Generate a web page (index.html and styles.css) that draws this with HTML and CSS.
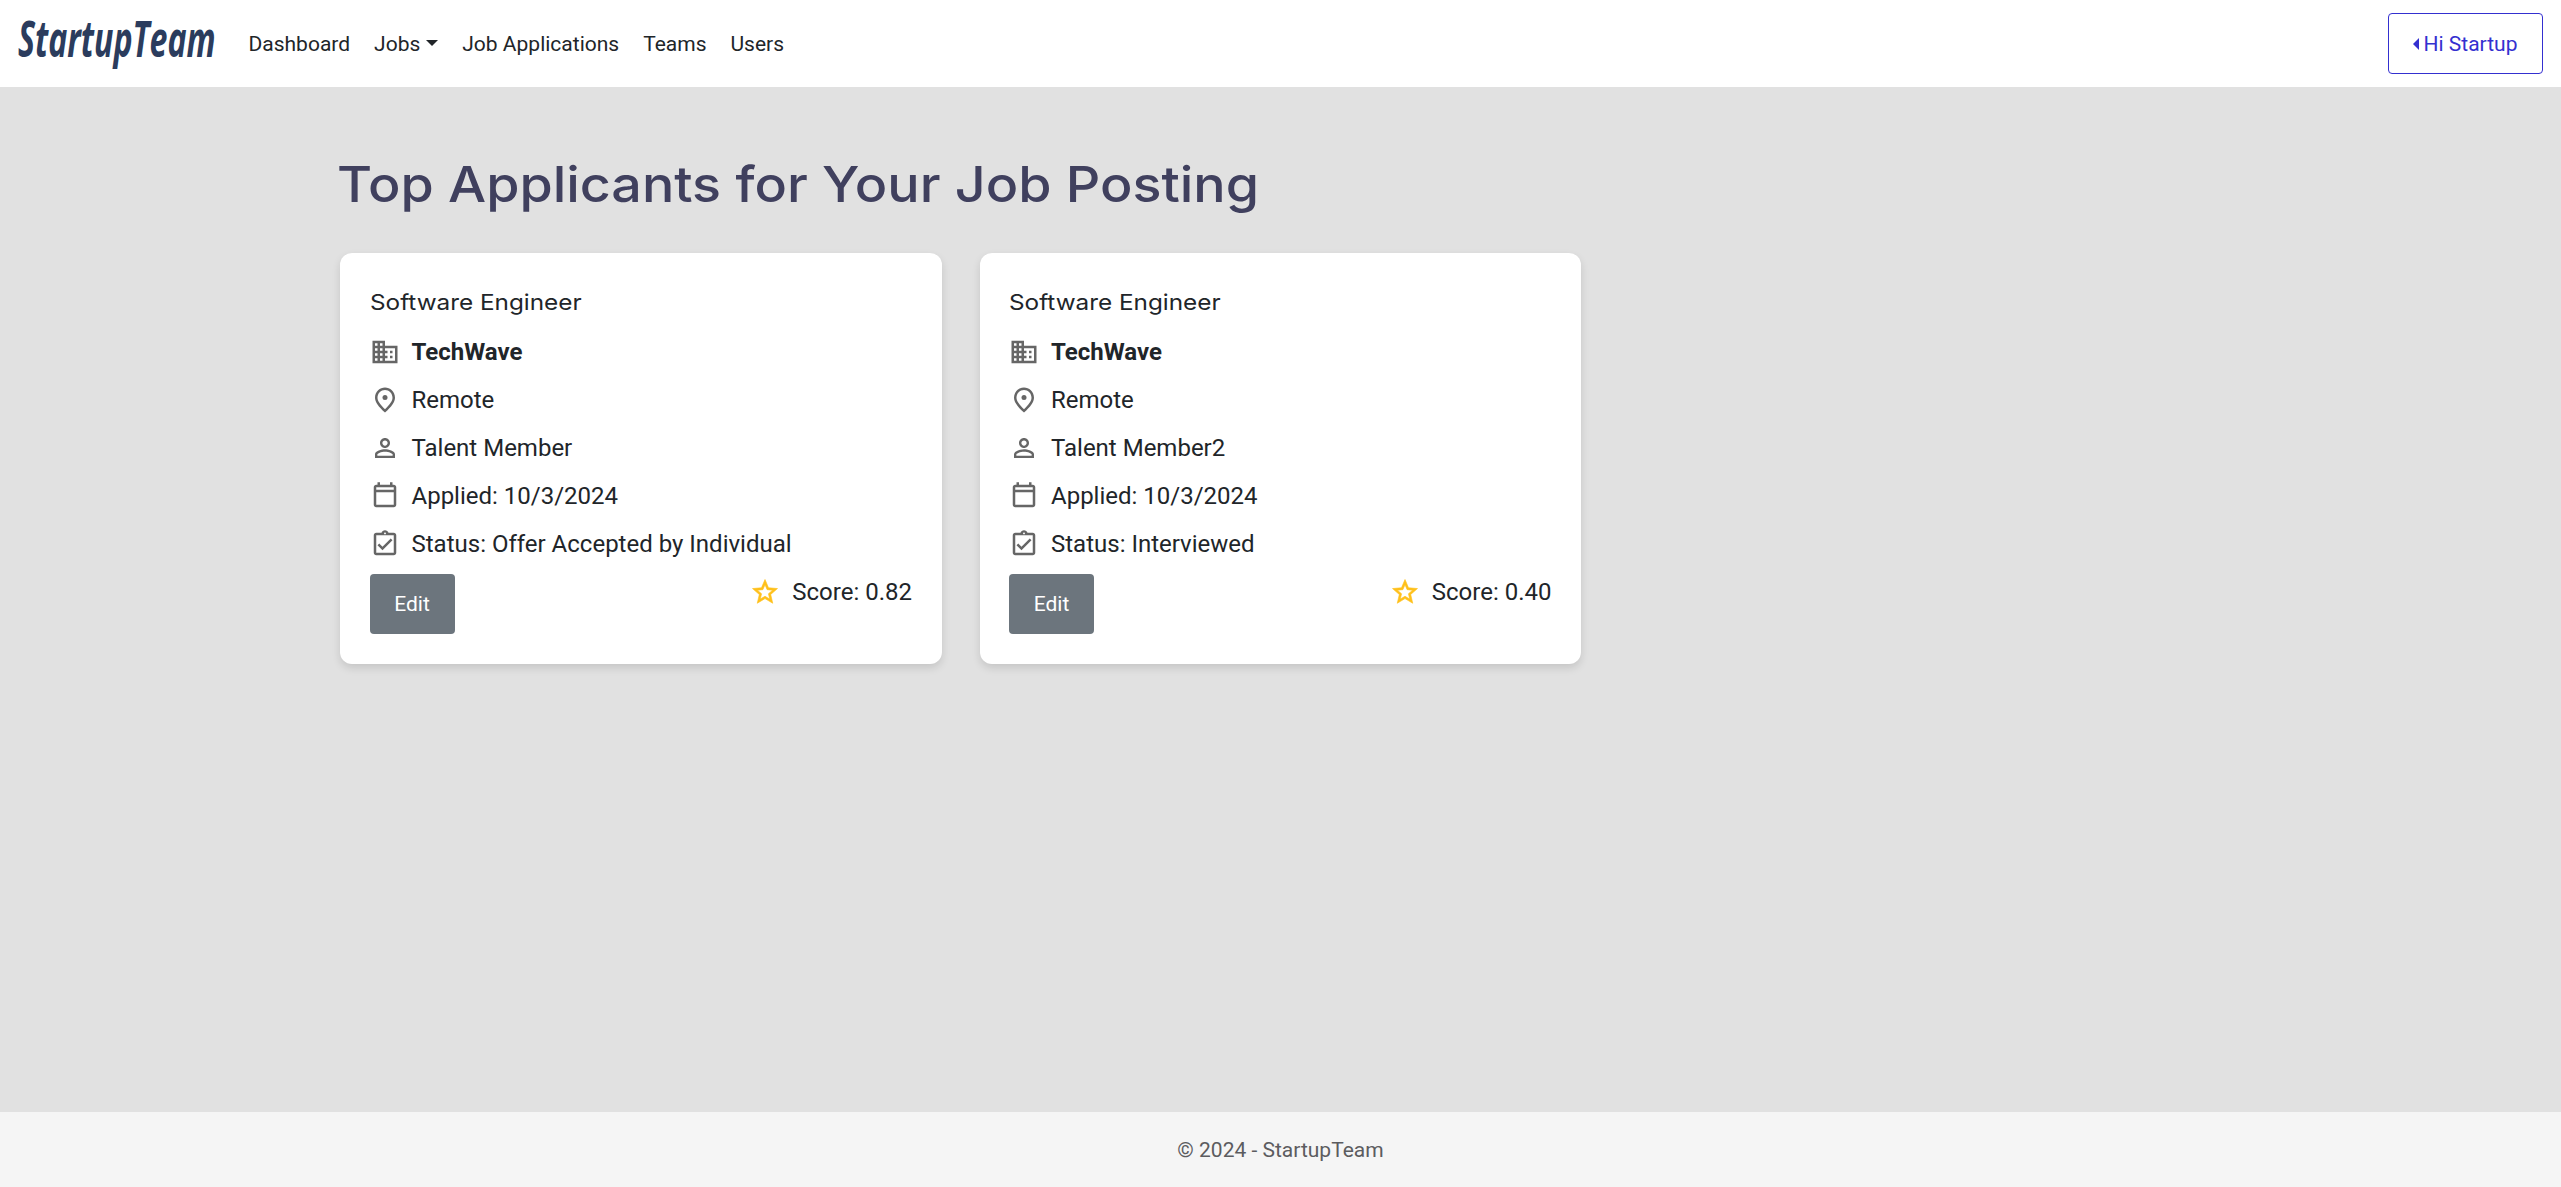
FILE: index.html
```html
<!DOCTYPE html>
<html lang="en">
<head>
<meta charset="utf-8">
<title>Top Applicants - StartupTeam</title>
<link rel="stylesheet" href="styles.css">
</head>
<body>
<svg class="sprite" aria-hidden="true">
  <symbol id="business" viewBox="0 0 24 24"><path d="M12 7V3H2v18h20V7H12zM6 19H4v-2h2v2zm0-4H4v-2h2v2zm0-4H4V9h2v2zm0-4H4V5h2v2zm4 12H8v-2h2v2zm0-4H8v-2h2v2zm0-4H8V9h2v2zm0-4H8V5h2v2zm10 12h-8v-2h2v-2h-2v-2h2v-2h-2V9h8v10zm-2-8h-2v2h2v-2zm0 4h-2v2h2v-2z"/></symbol>
  <symbol id="place" viewBox="0 0 24 24"><path d="M12 2C8 2 4 5.100 4 10.200c0 3.300 2.700 7.200 8 11.800 5.300-4.600 8-8.500 8-11.800C20 5.100 16 2 12 2zm0 17.300c-4-3.700-6-6.700-6-9.100C6 6.600 8.700 4 12 4s6 2.600 6 6.200c0 2.400-2 5.400-6 9.100z"/><circle cx="12" cy="10" r="2"/></symbol>
  <symbol id="person" viewBox="0 0 24 24"><path d="M12 5.900c1.160 0 2.100.94 2.100 2.100s-.94 2.100-2.100 2.100S9.900 9.160 9.900 8s.94-2.100 2.100-2.100m0 9c2.970 0 6.100 1.460 6.100 2.100v1.100H5.900V17c0-.64 3.130-2.100 6.100-2.100M12 4C9.790 4 8 5.790 8 8s1.790 4 4 4 4-1.790 4-4-1.790-4-4-4zm0 9c-2.670 0-8 1.340-8 4v3h16v-3c0-2.660-5.330-4-8-4z"/></symbol>
  <symbol id="calendar" viewBox="0 0 24 24"><path d="M19 3h-1V1h-2v2H8V1H6v2H5c-1.100 0-2 .9-2 2v14c0 1.100.9 2 2 2h14c1.100 0 2-.9 2-2V5c0-1.100-.9-2-2-2zm0 16H5V9h14v10zM5 7V5h14v2H5z"/></symbol>
  <symbol id="assignment" viewBox="0 0 24 24"><path d="M19 3h-4.180C14.400 1.840 13.300 1 12 1s-2.400.84-2.820 2H5c-1.100 0-2 .9-2 2v14c0 1.100.9 2 2 2h14c1.100 0 2-.9 2-2V5c0-1.100-.9-2-2-2zm-7-.25c.41 0 .75.340.75.75s-.34.750-.75.750-.75-.340-.75-.75.340-.75.750-.75zM19 19H5V5h14v14zM17.990 9l-1.410-1.420-6.590 6.590-2.580-2.570-1.420 1.410 4 3.990z"/></symbol>
  <symbol id="star" viewBox="0 0 24 24"><path d="M22 9.240l-7.190-.62L12 2 9.190 8.630 2 9.240l5.460 4.730L5.820 21 12 17.270 18.180 21l-1.630-7.030L22 9.240zM12 15.400l-3.760 2.270 1-4.280-3.320-2.880 4.380-.38L12 6.100l1.710 4.040 4.380.38-3.320 2.880 1 4.280L12 15.400z"/></symbol>
</svg>
<header class="navbar">
  <a class="brand"><span class="brand-text">StartupTeam</span></a>
  <nav class="nav">
    <a>Dashboard</a>
    <a class="dropdown">Jobs</a>
    <a>Job Applications</a>
    <a>Teams</a>
    <a>Users</a>
  </nav>
  <a class="user-button">Hi Startup</a>
</header>
<main class="container">
  <h1><span class="title-text">Top Applicants for Your Job Posting</span></h1>
  <div class="cards">
    <article class="card">
      <h2><span class="job-text">Software Engineer</span></h2>
      <div class="row"><svg><use href="#business"/></svg><strong>TechWave</strong></div>
      <div class="row"><svg><use href="#place"/></svg><span>Remote</span></div>
      <div class="row"><svg><use href="#person"/></svg><span>Talent Member</span></div>
      <div class="row"><svg><use href="#calendar"/></svg><span>Applied: 10/3/2024</span></div>
      <div class="row"><svg><use href="#assignment"/></svg><span>Status: Offer Accepted by Individual</span></div>
      <div class="actions">
        <a class="edit">Edit</a>
        <div class="row score"><svg><use href="#star"/></svg><span>Score: 0.82</span></div>
      </div>
    </article>
    <article class="card">
      <h2><span class="job-text">Software Engineer</span></h2>
      <div class="row"><svg><use href="#business"/></svg><strong>TechWave</strong></div>
      <div class="row"><svg><use href="#place"/></svg><span>Remote</span></div>
      <div class="row"><svg><use href="#person"/></svg><span>Talent Member2</span></div>
      <div class="row"><svg><use href="#calendar"/></svg><span>Applied: 10/3/2024</span></div>
      <div class="row"><svg><use href="#assignment"/></svg><span>Status: Interviewed</span></div>
      <div class="actions">
        <a class="edit">Edit</a>
        <div class="row score"><svg><use href="#star"/></svg><span>Score: 0.40</span></div>
      </div>
    </article>
  </div>
</main>
<footer class="footer">© 2024 - StartupTeam</footer>
</body>
</html>
```
FILE: styles.css
```css
* { box-sizing: border-box; }
body {
  margin: 0;
  min-height: 100vh;
  display: flex;
  flex-direction: column;
  background: #e1e1e1;
  color: #212529;
  font: 400 21px/30px Roboto, sans-serif;
}
.sprite { display: none; }
.navbar {
  height: 87px;
  padding: 0 18.500px 0 18px;
  display: flex;
  align-items: center;
  background: #fff;
}
.brand { width: 196px; height: 60px; margin-top: -14px; }
.brand-text {
  display: inline-block;
  font: italic 700 51px/60px "Open Sans", sans-serif;
  color: #2b3c5d;
  transform: scaleX(0.63);
  transform-origin: 0 0;
}
.nav { display: flex; gap: 24px; margin-left: 34.500px; }
.dropdown::after {
  content: "";
  display: inline-block;
  margin-left: 6px;
  vertical-align: 5px;
  border: 6px solid transparent;
  border-top-color: currentColor;
  border-bottom: 0;
}
.user-button {
  margin-left: auto;
  width: 155px;
  height: 61px;
  border: 1px solid #3430d0;
  border-radius: 4px;
  display: flex;
  align-items: center;
  justify-content: center;
  color: #3430d0;
}
.user-button::before {
  content: "";
  margin-right: 5px;
  border: 6px solid transparent;
  border-right-color: currentColor;
  border-left: 0;
}
.container { width: 1920px; margin: 0 auto; padding: 61px 18.750px 0 19.500px; flex: 1; }
h1 { margin: 0 0 30px -3px; height: 75px; font: 500 50px/72px Inter, sans-serif; color: #40405e; white-space: nowrap; }
.title-text { display: inline-block; transform: scaleX(1.076); transform-origin: 0 0; }
.cards { display: flex; gap: 38px; }
.card {
  width: 601.500px;
  height: 411px;
  padding: 30px 29.500px;
  border-radius: 12px;
  background: #fff;
  box-shadow: 0 4px 8px rgba(0, 0, 0, 0.12);
}
h2 { margin: 4px 0 11px; font: 400 22px/30px Inter, sans-serif; white-space: nowrap; }
.job-text { display: inline-block; transform: scaleX(1.105); transform-origin: 0 0; }
.row { display: flex; align-items: center; gap: 12px; height: 48px; font-size: 24px; }
.row svg { width: 30px; height: 30px; fill: #666; }
.actions { display: flex; justify-content: space-between; align-items: flex-start; }
.edit {
  width: 85px;
  height: 60px;
  margin-top: 6px;
  border-radius: 4px;
  background: #6c757d;
  color: #fff;
  line-height: 60px;
  text-align: center;
}
.row.score svg { fill: #ffc01a; stroke: #ffc01a; stroke-width: 0.5px; }
.footer { height: 75px; background: #f5f5f5; color: #5c5c5f; line-height: 76px; text-align: center; }
```
